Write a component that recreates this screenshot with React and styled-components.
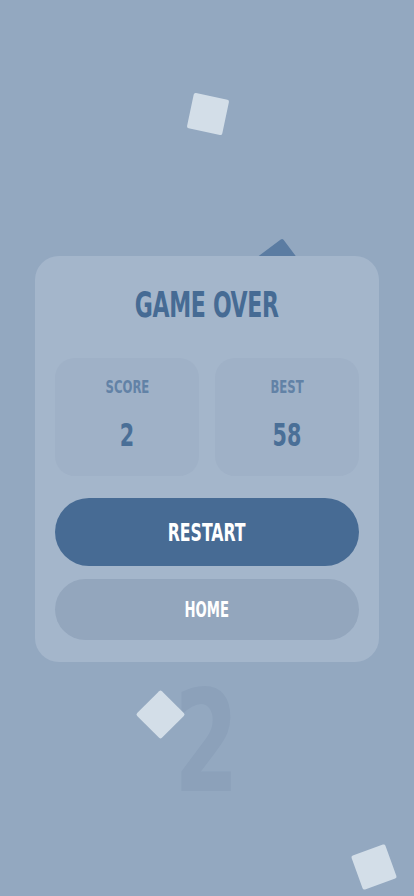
import React from 'react'
import styled, { createGlobalStyle } from 'styled-components'

const Global = createGlobalStyle`
  html, body {
    margin: 0;
    padding: 0;
    background: #93a8c0;
  }
  * { box-sizing: border-box; }
`

const Screen = styled.div`
  position: relative;
  width: 414px;
  height: 896px;
  overflow: hidden;
  background: #93a8c0;
  display: flex;
  flex-direction: column;
  align-items: center;
  padding-top: 256px;
  font-family: "Liberation Sans Narrow", "DejaVu Sans Condensed", "Liberation Sans", sans-serif;
  font-weight: 700;
`

const Shape = styled.div`
  position: absolute;
  left: ${p => p.x}px;
  top: ${p => p.y}px;
  width: ${p => p.size}px;
  height: ${p => p.size}px;
  background: ${p => p.color || '#d3dee8'};
  transform: rotate(${p => p.rot}deg);
  border-radius: 2px;
`

const GhostScore = styled.div`
  position: absolute;
  left: 174px;
  top: 673px;
  font-size: 140px;
  line-height: 1;
  color: #8ca1ba;
  transform: scaleX(0.74);
  transform-origin: left top;
`

const Card = styled.div`
  position: relative;
  z-index: 2;
  width: 344px;
  background: #a4b6cb;
  border-radius: 24px;
  padding: 24px 20px 22px;
  display: flex;
  flex-direction: column;
  align-items: center;
`

const Title = styled.h1`
  margin: 0 0 28px;
  font-size: 36px;
  line-height: 50px;
  letter-spacing: -0.5px;
  color: #466b94;
  transform: scaleX(0.68);
`

const Stats = styled.div`
  width: 100%;
  display: grid;
  grid-template-columns: 1fr 1fr;
  gap: 16px;
  margin-bottom: 22px;
`

const StatBox = styled.div`
  height: 118px;
  border-radius: 20px;
  background: #9fb1c7;
  display: flex;
  flex-direction: column;
  align-items: center;
  padding-top: 18px;
`

const StatLabel = styled.div`
  font-size: 18px;
  line-height: 22px;
  color: #6282a6;
  transform: scaleX(0.72);
`

const StatValue = styled.div`
  margin-top: 19px;
  font-size: 32px;
  line-height: 36px;
  color: #4a6f97;
  transform: scaleX(0.72);
`

const Button = styled.button`
  width: 100%;
  height: ${p => (p.primary ? 68 : 61)}px;
  border: none;
  border-radius: 34px;
  background: ${p => (p.primary ? '#476b94' : '#93a6bd')};
  color: #ffffff;
  font-family: inherit;
  font-weight: 700;
  font-size: ${p => (p.primary ? 25 : 21)}px;
  margin-top: ${p => (p.primary ? 0 : 13)}px;
  display: flex;
  align-items: center;
  justify-content: center;
  span { display: inline-block; transform: scaleX(0.7); }
`

export default function App() {
  return (
    <Screen>
      <Global />
      <Shape x={190} y={96} size={36} rot={12} />
      <Shape x={256} y={247} size={44} rot={-37} color="#5b7ca2" />
      <GhostScore>2</GhostScore>
      <Shape x={143} y={697} size={35} rot={45} />
      <Shape x={356} y={849} size={36} rot={-20} />
      <Card>
        <Title>GAME OVER</Title>
        <Stats>
          <StatBox>
            <StatLabel>SCORE</StatLabel>
            <StatValue>2</StatValue>
          </StatBox>
          <StatBox>
            <StatLabel>BEST</StatLabel>
            <StatValue>58</StatValue>
          </StatBox>
        </Stats>
        <Button primary><span>RESTART</span></Button>
        <Button><span>HOME</span></Button>
      </Card>
    </Screen>
  )
}
